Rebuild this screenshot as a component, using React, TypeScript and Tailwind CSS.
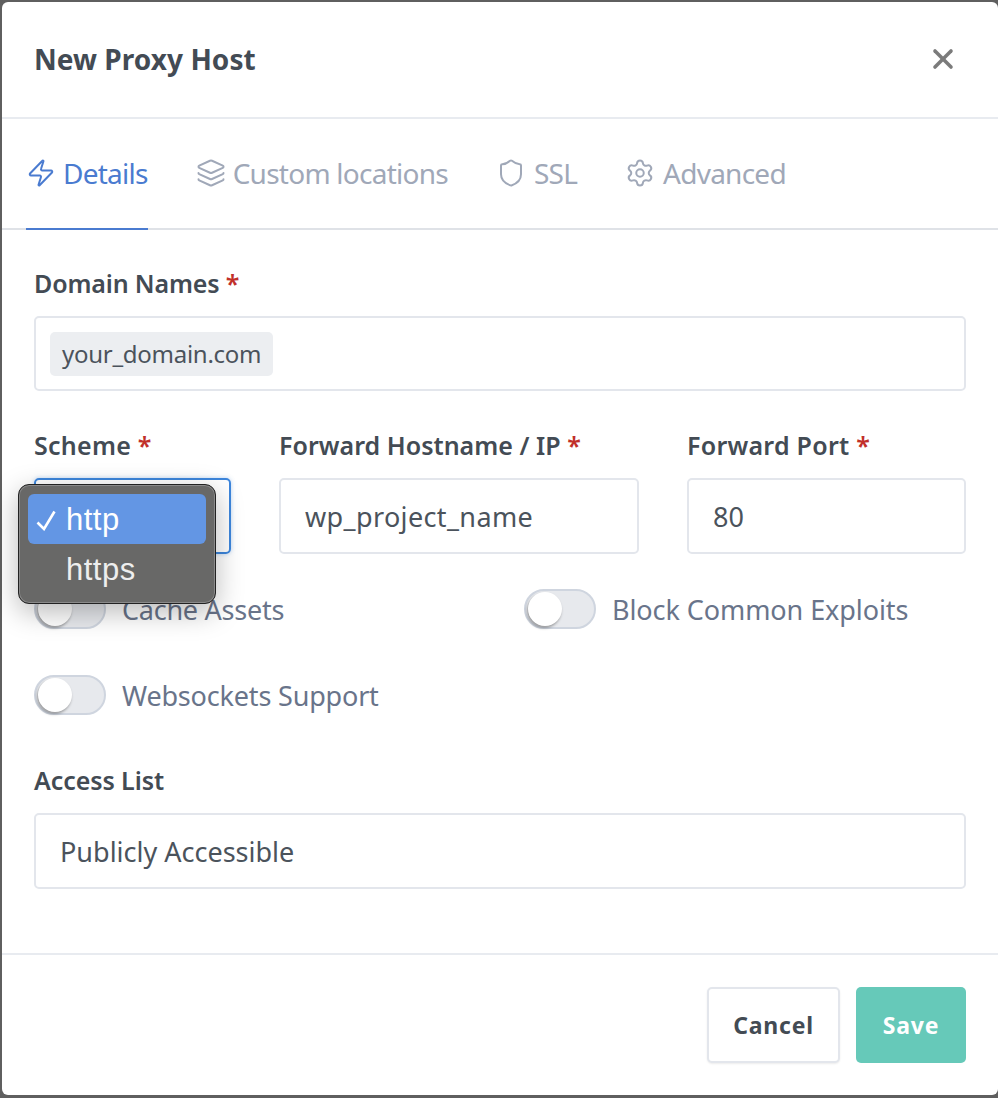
import React from "react";
import { Zap, Layers, Shield, Settings, X } from "lucide-react";

const font = { fontFamily: '"Noto Sans", sans-serif' };
const sysFont = { fontFamily: '"Liberation Sans", sans-serif' };

function Label({ text, required, className = "tracking-[-0.08px]" }: { text: string; required?: boolean; className?: string }) {
  return (
    <div className={"h-[34px] text-[25px] leading-[34px] font-semibold text-[#434b54] whitespace-nowrap " + className}>
      {text}
      {required && <span className="text-[#c1302a]"> *</span>}
    </div>
  );
}

function Toggle({ label, className = "tracking-[-0.18px]" }: { label: string; className?: string }) {
  return (
    <div className="flex items-center gap-[16px]">
      <div className="relative h-[40px] w-[72px] rounded-full border-2 border-[#cfd5df] bg-[#e7e9ed]">
        <div className="absolute left-[2px] top-[1px] h-[34px] w-[34px] rounded-full bg-white shadow-[-1px_2px_3px_rgba(0,0,0,0.35)]" />
      </div>
      <span className={"pt-[1px] text-[27px] leading-[36px] text-[#69748a] whitespace-nowrap " + className}>{label}</span>
    </div>
  );
}

function Tab({ icon, label, active, iconClass }: { icon: React.ReactNode; label: string; active?: boolean; iconClass: string }) {
  return (
    <div
      className={
        "flex h-[111px] items-center gap-[7px] pb-[2px] text-[28px] tracking-[-0.75px] whitespace-nowrap border-b-2 -mb-[2px] " +
        (active ? "border-[#4a7bd0] text-[#4a7bd0]" : "border-transparent text-[#a0a8b8]")
      }
    >
      <span className={"flex " + iconClass}>{icon}</span>
      {label}
    </div>
  );
}

export default function App() {
  return (
    <div style={font} className="h-[1098px] w-[998px] overflow-hidden bg-[#5f5f5f] pb-[3px] pl-[2px] pt-[2px]">
      <div className="relative flex h-full flex-col rounded-[6px] bg-white">
        <header className="flex h-[115px] shrink-0 items-center justify-between pb-[2px] pl-[32px] pr-[39px]">
          <h1 className="text-[28px] font-bold tracking-[0.05px] text-[#434b54]">New Proxy Host</h1>
          <X size={32} strokeWidth={2.7} className="text-[#7b7b7b]" />
        </header>

        <nav className="flex h-[113px] shrink-0 gap-[50px] border-y-2 border-b-[#dfe2e7] border-t-[#e8ebf0] pl-[24px]">
          <Tab active label="Details" iconClass="ml-0" icon={<Zap size={30} strokeWidth={1.6} />} />
          <Tab label="Custom locations" iconClass="-ml-[2px]" icon={<Layers size={30} strokeWidth={1.6} />} />
          <Tab label="SSL" iconClass="-ml-[2px] mr-[1px]" icon={<Shield size={30} strokeWidth={1.6} />} />
          <Tab label="Advanced" iconClass="-ml-[2px] mr-[1px]" icon={<Settings size={30} strokeWidth={1.6} />} />
        </nav>

        <main className="flex flex-1 flex-col px-[32px] pt-[36px]">
          <Label text="Domain Names" required className="tracking-[-0.15px]" />
          <div className="mt-[16px] flex h-[75px] items-center rounded-[5px] border-2 border-[#e3e6ec] px-[14px]">
            <span className="flex h-[44px] items-center rounded-[5px] bg-[#eceef1] px-[12px] text-[24px] tracking-[-0.27px] text-[#4b535c]">
              your_domain.com
            </span>
          </div>

          <div className="mt-[37px] flex gap-[48px]">
            <div className="relative w-[197px]">
              <Label text="Scheme" required className="tracking-[0.25px]" />
              <div className="mt-[16px] h-[76px] rounded-[5px] border-2 border-[#3d86dc] shadow-[0_0_4px_rgba(61,134,220,0.35)]" />
              <div className="absolute left-[-16px] top-[56px] z-10 flex h-[120px] w-[198px] flex-col rounded-[11px] border border-[#222] bg-[#686867] p-[9px] shadow-[0_8px_28px_rgba(0,0,0,0.28)] ring-1 ring-inset ring-[#8a8a8a]">
                <div
                  style={sysFont}
                  className="relative flex h-[50px] shrink-0 items-center rounded-[6px] bg-[#6396e4] pl-[38px] pt-[2px] text-[31px] tracking-[0.5px] text-white"
                >
                  <svg className="absolute left-[7px] top-[15px]" width="22" height="22" viewBox="0 0 22 22" fill="none">
                    <path d="M2.5 13.5L9 20L19.5 2.5" stroke="white" strokeWidth="2.6" />
                  </svg>
                  http
                </div>
                <div
                  style={sysFont}
                  className="flex h-[50px] shrink-0 items-center pl-[38px] pt-[2px] text-[31px] tracking-[0.5px] text-[#eeeeee]"
                >
                  https
                </div>
              </div>
            </div>
            <div className="w-[360px]">
              <Label text="Forward Hostname / IP" required className="tracking-[0.02px]" />
              <div className="mt-[16px] flex h-[76px] items-center rounded-[5px] border-2 border-[#e3e6ec] pl-[24px] pt-[2px] text-[27px] tracking-[0.37px] text-[#4b535c]">
                wp_project_name
              </div>
            </div>
            <div className="flex-1">
              <Label text="Forward Port" required className="tracking-[0.25px]" />
              <div className="mt-[16px] flex h-[76px] items-center rounded-[5px] border-2 border-[#e3e6ec] pl-[24px] pt-[2px] text-[27px] text-[#4b535c]">
                80
              </div>
            </div>
          </div>

          <div className="mt-[35px] grid grid-cols-[490px_1fr]">
            <Toggle label="Cache Assets" className="tracking-[-0.25px]" />
            <Toggle label="Block Common Exploits" className="tracking-[-0.08px]" />
          </div>
          <div className="mt-[46px]">
            <Toggle label="Websockets Support" />
          </div>

          <div className="mt-[48px]">
            <Label text="Access List" />
          </div>
          <div className="mt-[16px] flex h-[76px] items-center rounded-[5px] border-2 border-[#e3e6ec] pl-[24px] pt-[2px] text-[27px] text-[#4b535c]">
            Publicly Accessible
          </div>
        </main>

        <footer className="flex h-[142px] shrink-0 items-start justify-end gap-[16px] border-t-2 border-[#e8ebf0] pr-[32px] pt-[32px]">
          <button className="h-[76px] w-[133px] rounded-[5px] border-2 border-[#e3e6ec] bg-white text-[23px] font-bold tracking-[0.8px] text-[#434b54] shadow-[0_1px_2px_rgba(0,0,0,0.08)]">
            Cancel
          </button>
          <button className="h-[76px] w-[110px] rounded-[5px] bg-[#66c9b9] text-[23px] font-bold tracking-[0.8px] text-white">
            Save
          </button>
        </footer>
      </div>
    </div>
  );
}
